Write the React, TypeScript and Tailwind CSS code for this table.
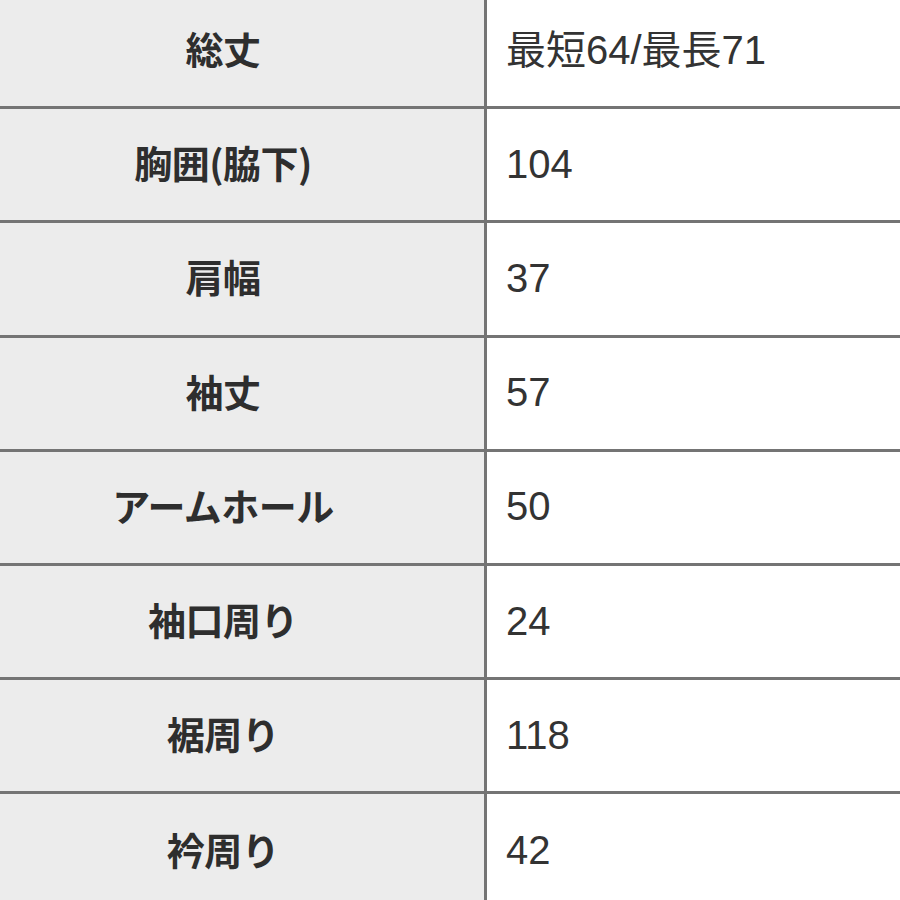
const rows: [string, string][] = [
  ["総丈", "最短64/最長71"],
  ["胸囲(脇下)", "104"],
  ["肩幅", "37"],
  ["袖丈", "57"],
  ["アームホール", "50"],
  ["袖口周り", "24"],
  ["裾周り", "118"],
  ["衿周り", "42"],
];

export default function App() {
  return (
    <div
      className="w-[900px] h-[900px] overflow-hidden bg-white"
      style={{ fontFamily: '"Noto Sans CJK JP", "Noto Sans", sans-serif' }}
    >
      {/* table is cropped at top and left in the screenshot */}
      <div className="-mt-[5px] -ml-[38px] w-[960px]">
        {rows.map(([label, value], i) => (
          <div
            key={label}
            className={`flex h-[114.2px] ${i < rows.length - 1 ? "border-b-[3px] border-[#747474]" : ""}`}
          >
            <div className="w-[525px] shrink-0 flex items-center justify-center pb-[6px] bg-[#ececec] border-r-[3px] border-[#747474] text-[38px] font-bold text-[#2e2e2e] tracking-[-0.5px]">
              {label}
            </div>
            <div
              className="flex-1 flex items-center pl-[19px] pb-[2px] text-[40px] text-[#333] font-normal"
              style={{ fontFamily: '"Liberation Sans", "Noto Sans CJK JP", sans-serif' }}
            >
              {value}
            </div>
          </div>
        ))}
      </div>
    </div>
  );
}
